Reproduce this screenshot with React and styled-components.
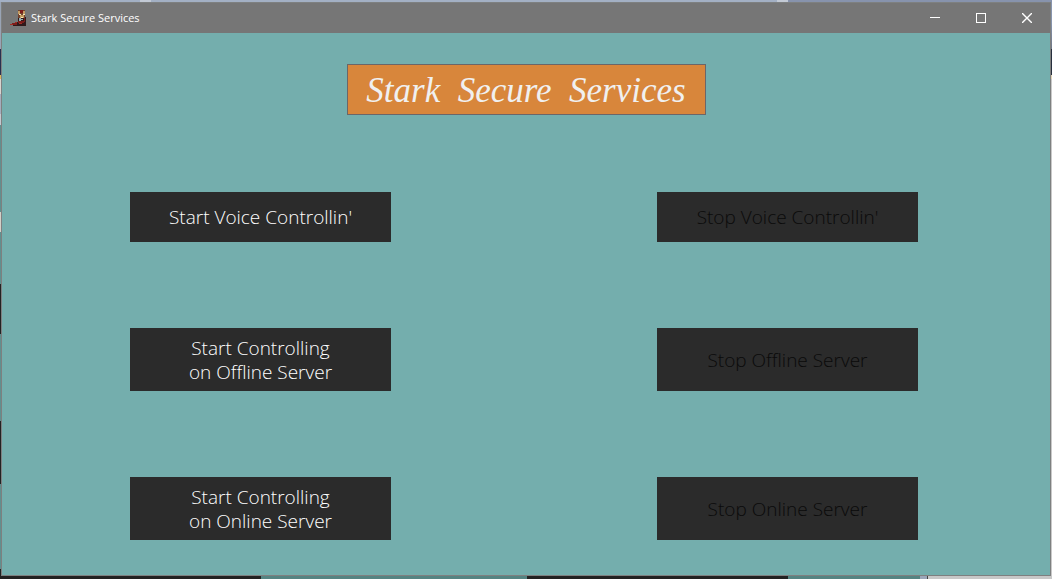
import React from 'react';
import styled, { createGlobalStyle } from 'styled-components';

const GlobalStyle = createGlobalStyle`
  * { box-sizing: border-box; }
  body { margin: 0; background: #5c8f8d; }
  button { font: inherit; border: 0; padding: 0; }
`;

const Desktop = styled.div`
  display: grid;
  grid-template: 2px 1fr 3px / 1px 1fr 1px;
  min-height: 100vh;
`;

const TopEdge = styled.div`
  grid-column: 1 / -1;
  background: linear-gradient(
    90deg,
    #a3b0c4 0 140px, #c3cad5 140px 151px, #a3b0c4 151px 777px,
    #c3cad5 777px 788px, #8793ad 788px
  );
`;

const LeftEdge = styled.div`
  background: linear-gradient(
    #99a4b5 0 47px, #28304f 47px 73px, #d9b95f 73px 77px, #d9d4cf 77px 92px,
    #a4adbd 92px 112px, #c4c8cf 112px 123px, #5f908f 123px 210px,
    #d4d0c8 210px 230px, #5f908f 230px 282px, #222 282px 332px,
    #5f908f 332px 419px, #222 419px 482px, #5f908f 482px 567px, #222 567px
  );
`;

const RightEdge = styled.div`
  background: linear-gradient(#8895ae 0 20px, #6f7785 47px, #28303f 47px 73px, #e2d3b5 73px 77px, #c9c9c9 77px);
`;

const BottomEdge = styled.div`
  grid-column: 1 / -1;
  background: linear-gradient(
    90deg,
    #222 0 261px, #558482 261px 527px, #222 527px 788px, #558482 788px 920px,
    #9ba6b9 920px 927px, #444 927px 928px, #c8c8c8 928px
  );
`;

const Window = styled.div`
  display: flex;
  flex-direction: column;
  border: 1px solid #7e8080;
  background: #74aead;
`;

const TitleBar = styled.header`
  display: flex;
  align-items: center;
  height: 30px;
  padding-left: 8px;
  background: #767676;
  color: #fff;
`;

const AppName = styled.span`
  flex: 1;
  padding-left: 5px;
  font: 11px/16px "Segoe UI", "Open Sans", sans-serif;
`;

const CaptionButton = styled.button`
  display: grid;
  place-items: center;
  width: 46px;
  height: 30px;
  background: transparent;
  color: #fff;
`;

const Content = styled.main`
  display: flex;
  flex-direction: column;
  align-items: center;
  padding: 31px 0 34px;
`;

const Banner = styled.h1`
  width: 359px;
  margin: 0 0 77px;
  padding-top: 2px;
  border: 1px solid #6b6668;
  background: #d8863b;
  color: #f0f0f0;
  font: italic 35px/47px "Monotype Corsiva", "Liberation Serif", serif;
  text-align: center;
  white-space: pre;
`;

const Controls = styled.div`
  display: grid;
  grid-template-columns: 261px 261px;
  justify-content: space-between;
  row-gap: 86px;
  width: 100%;
  padding: 0 132px 0 128px;
`;

const ActionButton = styled.button`
  min-height: ${({ $tall }) => ($tall ? 63 : 50)}px;
  background: #2b2b2b;
  color: #fff;
  font: 300 19px/24px "Segoe UI Light", "Open Sans", sans-serif;
  font-variant-ligatures: none;
  text-align: center;
  white-space: pre-line;

  &:disabled { color: #0a0a0a; }
`;

const actions = [
  { label: "Start Voice Controllin'" },
  { label: "Stop Voice Controllin'", disabled: true },
  { label: 'Start Controlling\non Offline Server', tall: true },
  { label: 'Stop Offline Server', tall: true, disabled: true },
  { label: 'Start Controlling\non Online Server', tall: true },
  { label: 'Stop Online Server', tall: true, disabled: true },
];

const HeroIcon = () => (
  <svg width="16" height="16" viewBox="0 0 16 16" shapeRendering="crispEdges" aria-hidden="true">
    <path fill="#30191a" d="M8 7h8v9H3v-1H0v-1h2v-1h4v-1h2z" />
    <path fill="#73422c" d="M8 0h7v8H8z" />
    <path fill="#c49a60" d="M8 1h2v3H8zM13 1h2v3h-2zM10 5h4v3h-4z" />
    <path fill="#7c1c19" d="M10 0h3v3h-3zM8 11h6v2H8zM2 13h5v2H2zM14 8h1v4h-1z" />
    <path fill="#f5e6b9" d="M9 4h2v1H9zM13 4h2v1h-2zM11 7h2v1h-2z" />
    <path fill="#8faab0" d="M9 8h2v3H9zM11 9h2v1h-2z" />
    <path fill="#a32a22" d="M0 14h3v1H0zM5 12h2v1H5zM9 13h3v1H9z" />
  </svg>
);

const Glyph = ({ d, smooth }) => (
  <svg width="10" height="10" viewBox="0 0 10 10" fill="none" stroke="currentColor"
    strokeWidth={smooth ? 1.4 : 1}
    shapeRendering={smooth ? 'auto' : 'crispEdges'} aria-hidden="true">
    <path d={d} />
  </svg>
);

export default function App() {
  return (
    <>
      <GlobalStyle />
      <Desktop>
        <TopEdge />
        <LeftEdge />
        <Window>
          <TitleBar>
            <HeroIcon />
            <AppName>Stark Secure Services</AppName>
            <CaptionButton aria-label="Minimize"><Glyph d="M0 4.5h10" /></CaptionButton>
            <CaptionButton aria-label="Maximize"><Glyph d="M.5 .5h9v9h-9z" /></CaptionButton>
            <CaptionButton aria-label="Close"><Glyph smooth d="M0 0l10 10M10 0L0 10" /></CaptionButton>
          </TitleBar>
          <Content>
            <Banner>{'Stark  Secure  Services'}</Banner>
            <Controls>
              {actions.map(({ label, tall, disabled }) => (
                <ActionButton key={label} $tall={tall} disabled={disabled}>{label}</ActionButton>
              ))}
            </Controls>
          </Content>
        </Window>
        <RightEdge />
        <BottomEdge />
      </Desktop>
    </>
  );
}
